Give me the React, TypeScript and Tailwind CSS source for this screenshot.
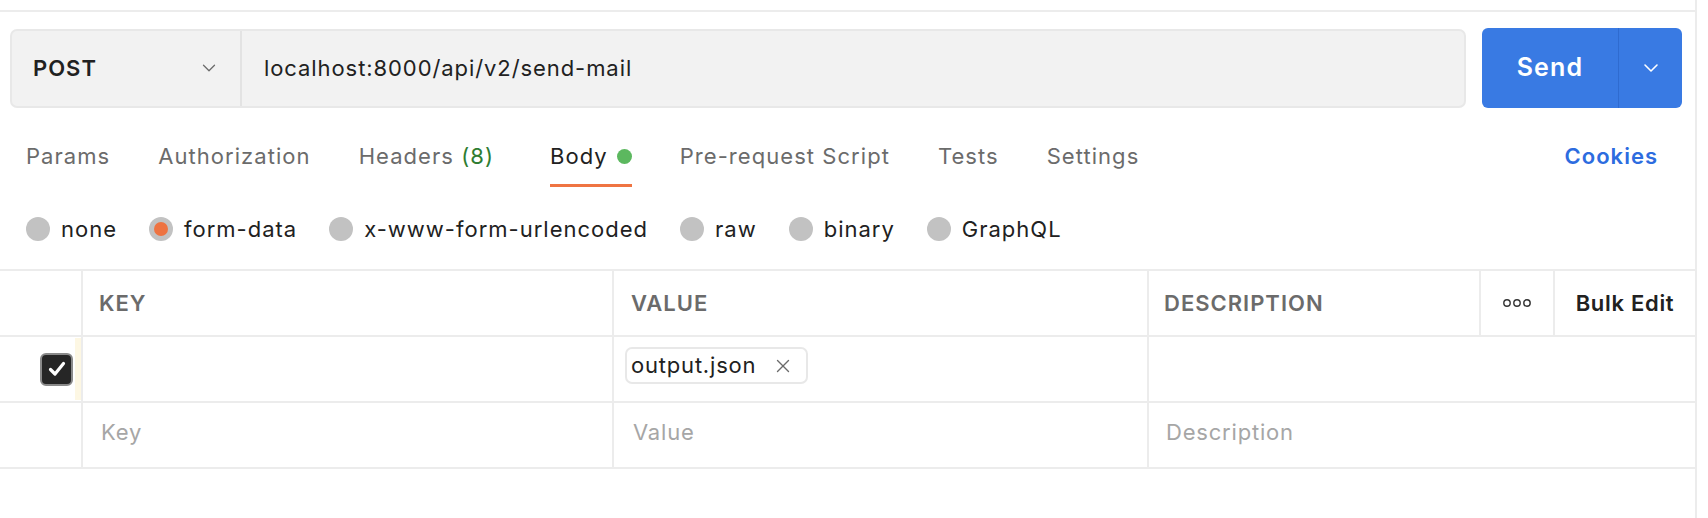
import React from "react";
import { ChevronDown, X } from "lucide-react";

const tabs = [
  { label: "Params" },
  { label: "Authorization" },
  { label: "Headers", count: "(8)" },
  { label: "Body", active: true },
  { label: "Pre-request Script" },
  { label: "Tests" },
  { label: "Settings" },
];

const radios = [
  { label: "none" },
  { label: "form-data", selected: true },
  { label: "x-www-form-urlencoded" },
  { label: "raw" },
  { label: "binary" },
  { label: "GraphQL" },
];

function Radio({ selected }: { selected?: boolean }) {
  return (
    <span className="w-[24px] h-[24px] rounded-full bg-[#c2c2c2] flex items-center justify-center">
      {selected && <span className="w-[14px] h-[14px] rounded-full bg-[#ee7341]" />}
    </span>
  );
}

function Checkbox() {
  return (
    <span className="w-[33px] h-[33px] rounded-[6px] bg-[#262626] border-2 border-[#8a8a8a] flex items-center justify-center">
      <svg width="22" height="22" viewBox="0 0 22 22" fill="none">
        <path d="M4.5 11.5 L9 16 L17.5 5.5" stroke="white" strokeWidth="3.2" strokeLinecap="round" strokeLinejoin="round" />
      </svg>
    </span>
  );
}

export default function App() {
  return (
    <div className="w-[1708px] h-[518px] bg-white flex font-['Inter',sans-serif] text-[#212121] overflow-hidden tracking-[0.8px]">
      <div className="w-[1697px] h-full border-r-2 border-[#ececec] flex flex-col">
        <div className="h-[12px] border-b-2 border-[#ececec] shrink-0" />

        {/* URL row */}
        <div className="flex items-center pl-[10px] pt-[16px] shrink-0">
          <div className="w-[1456px] h-[79px] rounded-[7px] bg-[#f2f2f2] border-2 border-[#e8e8e8] flex items-stretch">
            <div className="w-[230px] border-r-2 border-[#e3e3e3] flex items-center justify-between pl-[21px] pr-[20px]">
              <span className="text-[22px] font-semibold tracking-[1px]">POST</span>
              <ChevronDown size={22} strokeWidth={1.4} className="text-[#6b6b6b]" />
            </div>
            <div className="flex items-center pl-[22px] text-[22px] text-[#212121] tracking-[0.92px]">localhost:8000/api/v2/send-mail</div>
          </div>
          <div className="ml-[16px] w-[200px] h-[80px] rounded-[6px] bg-[#397ae3] flex items-stretch text-white">
            <div className="flex-1 flex items-center justify-center text-[25px] font-semibold tracking-[1.2px]">Send</div>
            <div className="w-[64px] border-l border-[#2f6bd0] flex items-center justify-center">
              <ChevronDown size={24} strokeWidth={1.6} />
            </div>
          </div>
        </div>

        {/* Tabs */}
        <div className="flex items-start justify-between pl-[26px] pr-[37px] pt-[31px] shrink-0">
          <div className="flex gap-[48px] tracking-[1.05px]">
            {tabs.map((t) => (
              <div key={t.label} className={`flex flex-col items-stretch ${t.active ? "ml-[8px]" : ""}`}>
                <div className={`flex items-center gap-[9px] text-[22px] h-[34px] ${t.active ? "text-[#212121]" : "text-[#6b6b6b]"}`}>
                  <span>
                    {t.label}
                    {t.count && <span className="text-[#2e7d32]"> {t.count}</span>}
                  </span>
                  {t.active && <span className="w-[15px] h-[15px] rounded-full bg-[#5cb85f]" />}
                </div>
                <div className={`h-[3px] mt-[11px] ${t.active ? "bg-[#ef7442]" : ""}`} />
              </div>
            ))}
          </div>
          <div className="h-[34px] flex items-center text-[22px] font-semibold text-[#2d6cdf] tracking-[1px]">Cookies</div>
        </div>

        {/* Radios */}
        <div className="flex items-center gap-[32px] pl-[26px] pt-[22px] h-[62px] shrink-0 tracking-[1px]">
          {radios.map((r) => (
            <div key={r.label} className="flex items-center gap-[11px] text-[22px] text-[#212121]">
              <Radio selected={r.selected} />
              <span>{r.label}</span>
            </div>
          ))}
        </div>

        {/* Table */}
        <div className="mt-[20px] border-t-2 border-[#ececec]">
          {/* header */}
          <div className="flex h-[66px] border-b-2 border-[#ececec] text-[22px] tracking-[1px]">
            <div className="w-[83px] border-r-2 border-[#ececec]" />
            <div className="w-[531px] border-r-2 border-[#ececec] flex items-center pl-[16px] font-semibold text-[#6b6b6b]">KEY</div>
            <div className="w-[535px] border-r-2 border-[#ececec] flex items-center pl-[17px] font-semibold text-[#6b6b6b]">VALUE</div>
            <div className="w-[332px] border-r-2 border-[#ececec] flex items-center pl-[15px] font-semibold text-[#6b6b6b]">DESCRIPTION</div>
            <div className="w-[74px] border-r-2 border-[#ececec] flex items-center justify-center">
              <svg width="30" height="10" viewBox="0 0 30 10" fill="none">
                <circle cx="5" cy="5" r="3.2" stroke="#333" strokeWidth="1.4" />
                <circle cx="15" cy="5" r="3.2" stroke="#333" strokeWidth="1.4" />
                <circle cx="25" cy="5" r="3.2" stroke="#333" strokeWidth="1.4" />
              </svg>
            </div>
            <div className="flex-1 flex items-center justify-center font-semibold text-[#212121] tracking-[0.7px]">Bulk Edit</div>
          </div>
          {/* row 1 */}
          <div className="flex h-[66px] border-b-2 border-[#ececec] text-[22px]">
            <div className="w-[83px] border-r-2 border-[#ececec] flex items-center justify-end">
              <div className="mr-[2px]"><Checkbox /></div>
              <div className="w-[6px] self-stretch my-[1px] bg-[#fdf7e3]" />
            </div>
            <div className="w-[531px] border-r-2 border-[#ececec]" />
            <div className="w-[535px] border-r-2 border-[#ececec] flex items-center pl-[11px] pb-[7px]">
              <div className="h-[37px] rounded-[7px] border-2 border-[#e8e8e8] flex items-center pl-[4px] pr-[12px] gap-[16px]">
                <span>output.json</span>
                <X size={22} strokeWidth={1.5} className="text-[#6b6b6b]" />
              </div>
            </div>
            <div className="flex-1" />
          </div>
          {/* row 2 */}
          <div className="flex h-[66px] border-b-2 border-[#ececec] text-[22px] text-[#a6a6a6]">
            <div className="w-[83px] border-r-2 border-[#ececec]" />
            <div className="w-[531px] border-r-2 border-[#ececec] flex items-center pl-[18px] pb-[6px]">Key</div>
            <div className="w-[535px] border-r-2 border-[#ececec] flex items-center pl-[19px] pb-[6px]">Value</div>
            <div className="flex-1 flex items-center pl-[17px] pb-[6px]">Description</div>
          </div>
        </div>
      </div>
    </div>
  );
}
